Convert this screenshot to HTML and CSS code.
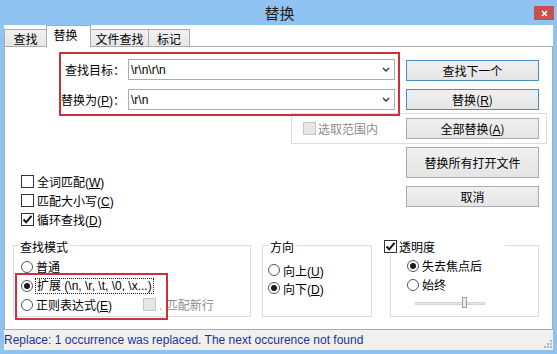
FILE: index.html
```html
<!DOCTYPE html>
<html lang="zh-CN">
<head>
  <meta charset="UTF-8">
  <title>替换</title>
  <link rel="stylesheet" href="styles.css">
</head>
<body>
  <div class="window">
    <div class="titlebar">
      <span></span>
      <span class="title">替换</span>
      <span class="close">
        <svg width="7" height="7" viewBox="0 0 7 7"><path d="M1 1 L6 6 M6 1 L1 6" stroke="#fff" stroke-width="1.6"/></svg>
      </span>
    </div>

    <div class="client">
      <div class="tabs">
        <div class="tab t1">查找</div>
        <div class="tab t2 active">替换</div>
        <div class="tab t3">文件查找</div>
        <div class="tab t4">标记</div>
      </div>

      <div class="panel">
        <div class="top">
          <div class="left">
            <div class="find-box">
              <div class="field">
                <label class="field-label">查找目标：</label>
                <div class="combo">
                  <span class="combo-text">\r\n\r\n</span>
                  <svg class="arrow" width="8" height="5" viewBox="0 0 8 5"><path d="M1 1 L4 4 L7 1" stroke="#333" stroke-width="1.4" fill="none"/></svg>
                </div>
              </div>
              <div class="field">
                <label class="field-label">替换为(<u>P</u>)：</label>
                <div class="combo">
                  <span class="combo-text">\r\n</span>
                  <svg class="arrow" width="8" height="5" viewBox="0 0 8 5"><path d="M1 1 L4 4 L7 1" stroke="#333" stroke-width="1.4" fill="none"/></svg>
                </div>
              </div>
            </div>

            <div class="scope">
              <span class="check disabled"></span>
              <span class="muted">选取范围内</span>
            </div>

            <div class="checks">
              <div class="row"><span class="check"></span><span>全词匹配(<u>W</u>)</span></div>
              <div class="row"><span class="check"></span><span>匹配大小写(<u>C</u>)</span></div>
              <div class="row">
                <span class="check on">
                  <svg width="11" height="11" viewBox="0 0 11 11"><path d="M1.5 5.5 L4.2 8.3 L9.5 1.8" stroke="#111" stroke-width="2" fill="none"/></svg>
                </span>
                <span>循环查找(<u>D</u>)</span>
              </div>
            </div>
          </div>

          <div class="buttons">
            <button class="btn default">查找下一个</button>
            <button class="btn default">替换(<u>R</u>)</button>
            <button class="btn">全部替换(<u>A</u>)</button>
            <button class="btn tall">替换所有打开文件</button>
            <button class="btn">取消</button>
          </div>
        </div>

        <div class="groups">
          <div class="group mode">
            <div class="group-head"><span class="group-title">查找模式</span></div>
            <div class="opts">
              <div class="row"><span class="radio"></span><span>普通</span></div>
              <div class="row"><span class="radio on"></span><span class="focus">扩展 (\n, \r, \t, \0, \x...)</span></div>
              <div class="row">
                <span class="radio"></span><span class="regex-label">正则表达式(<u>E</u>)</span>
                <span class="check disabled"></span><span class="muted dotnl">. 匹配新行</span>
              </div>
            </div>
            <div class="mark"></div>
          </div>

          <div class="group dir">
            <div class="group-head"><span class="group-title">方向</span></div>
            <div class="opts">
              <div class="row"><span class="radio"></span><span>向上(<u>U</u>)</span></div>
              <div class="row"><span class="radio on"></span><span>向下(<u>D</u>)</span></div>
            </div>
          </div>

          <div class="group trans">
            <div class="group-head">
              <span class="group-title">
                <span class="check on">
                  <svg width="11" height="11" viewBox="0 0 11 11"><path d="M1.5 5.5 L4.2 8.3 L9.5 1.8" stroke="#111" stroke-width="2" fill="none"/></svg>
                </span>
                <span>透明度</span>
              </span>
            </div>
            <div class="opts">
              <div class="row"><span class="radio on"></span><span>失去焦点后</span></div>
              <div class="row"><span class="radio"></span><span>始终</span></div>
            </div>
            <div class="slider"><span class="track"></span><span class="thumb"></span></div>
          </div>
        </div>
      </div>

      <div class="status">
        <span class="status-text">Replace: 1 occurrence was replaced. The next occurence not found</span>
        <svg class="grip" width="9" height="9" viewBox="0 0 9 9">
          <rect x="7" y="1" width="2" height="2" fill="#b5b5b5"/>
          <rect x="4" y="4" width="2" height="2" fill="#b5b5b5"/>
          <rect x="7" y="4" width="2" height="2" fill="#b5b5b5"/>
          <rect x="1" y="7" width="2" height="2" fill="#b5b5b5"/>
          <rect x="4" y="7" width="2" height="2" fill="#b5b5b5"/>
          <rect x="7" y="7" width="2" height="2" fill="#b5b5b5"/>
        </svg>
      </div>
    </div>
  </div>
</body>
</html>
```

FILE: styles.css
```css
body {
  margin: 0;
  font-family: "Liberation Sans", "Noto Sans CJK SC", sans-serif;
  font-size: 12px;
  color: #000;
}
.window {
  width: 557px;
  height: 354px;
  box-sizing: border-box;
  padding: 0 4px 4px 4px;
  background: #8fc4f2;
}
.titlebar {
  height: 25px;
  display: grid;
  grid-template-columns: 1fr auto 1fr;
  align-items: center;
}
.title {
  font-family: "Noto Sans CJK SC", sans-serif;
  font-size: 15px;
  color: #1e1e1e;
  margin-left: 2px;
}
.close {
  justify-self: end;
  width: 20px;
  height: 14px;
  margin-right: -1px;
  margin-top: 1px;
  background: #c75050;
  display: flex;
  align-items: center;
  justify-content: center;
}
.client {
  height: 325px;
  background: #fff;
  display: flex;
  flex-direction: column;
}
.tabs {
  height: 21px;
  display: flex;
  align-items: flex-end;
}
.tab {
  height: 17px;
  box-sizing: border-box;
  border: 1px solid #acacac;
  border-bottom: none;
  margin-right: -1px;
  background: linear-gradient(#f2f2f2, #e6e6e6);
  display: flex;
  align-items: center;
  justify-content: center;
  font-family: "Noto Sans CJK SC", sans-serif;
  padding-top: 1px;
}
.t1 { width: 43px; }
.t2 { width: 45px; }
.t3 { width: 59px; }
.t4 { width: 42px; }
.tab.active {
  height: 22px;
  margin-bottom: -1px;
  background: #fff;
  position: relative;
  z-index: 3;
  padding-top: 0;
  padding-bottom: 4px;
  padding-right: 6px;
}
.panel {
  height: 284px;
  box-sizing: border-box;
  border: 1px solid #acacac;
}
.top {
  display: flex;
}
.left {
  width: 401px;
}
.find-box {
  margin: 5px 0 0 54px;
  width: 341px;
  height: 64px;
  box-sizing: border-box;
  border: 2px solid #c8323c;
  padding-top: 5px;
  display: flex;
  flex-direction: column;
  gap: 9px;
  position: relative;
  z-index: 1;
}
.field {
  display: flex;
  align-items: center;
  height: 21px;
}
.field-label {
  width: 64px;
  margin-right: 3px;
  text-align: right;
  white-space: nowrap;
}
.combo {
  width: 267px;
  height: 21px;
  box-sizing: border-box;
  border: 1px solid #acacac;
  background: #fff;
  display: flex;
  align-items: center;
  padding: 0 4px 0 2px;
}
.combo-text {
  flex: 1;
}
.arrow {
  display: block;
}
.scope {
  margin: -3px 0 0 286px;
  width: 256px;
  height: 31px;
  box-sizing: border-box;
  border: 1px solid #dcdcdc;
  display: flex;
  align-items: center;
  padding-left: 11px;
}
.muted {
  color: #8d8d8d;
  margin-left: 2px;
}
.checks {
  margin-top: 28px;
  padding-left: 16px;
}
.row {
  height: 19px;
  display: flex;
  align-items: center;
  white-space: nowrap;
}
.check {
  width: 13px;
  height: 13px;
  box-sizing: border-box;
  border: 1px solid #333;
  background: #fff;
  margin-right: 3px;
  display: inline-flex;
  align-items: center;
  justify-content: center;
  flex: none;
}
.check.disabled {
  border-color: #c4c4c4;
  background: #e6e6e6;
  margin-right: 0;
}
.radio {
  width: 12px;
  height: 12px;
  box-sizing: border-box;
  border: 1px solid #555;
  border-radius: 50%;
  background: #fff;
  margin-right: 3px;
  display: inline-flex;
  align-items: center;
  justify-content: center;
  flex: none;
}
.radio.on::after {
  content: "";
  width: 6px;
  height: 6px;
  border-radius: 50%;
  background: #1a1a1a;
}
.buttons {
  width: 133px;
  margin-top: 13px;
  display: flex;
  flex-direction: column;
  gap: 8px;
  position: relative;
  z-index: 2;
}
.btn {
  height: 21px;
  border: 1px solid #acacac;
  background: linear-gradient(#f0f0f0, #e5e5e5);
  font-family: "Noto Sans CJK SC", sans-serif;
  font-size: 12px;
  color: #000;
  padding: 0;
}
.btn u {
  font-family: "Liberation Sans", sans-serif;
}
.btn.default {
  border-color: #4a8cc4;
}
.btn.tall {
  height: 31px;
}
.groups {
  display: flex;
  margin: 16px 0 0 8px;
}
.group {
  height: 72px;
  box-sizing: border-box;
  border: 1px solid #dcdcdc;
  position: relative;
}
.group-head {
  height: 16px;
  margin-top: -8px;
  display: flex;
}
.group-title {
  display: flex;
  align-items: center;
  background: #fff;
  padding: 0 1px;
  margin-left: 5px;
  white-space: nowrap;
}
.mode { width: 238px; }
.mode .opts { margin-top: 3px; padding-left: 7px; }
.regex-label { width: 107px; }
.dotnl { margin-left: 3px; }
.focus {
  outline: 1px dotted #222;
  padding: 0 1px;
  line-height: 14px;
}
.mark {
  position: absolute;
  left: 1px;
  top: 27px;
  width: 153px;
  height: 47px;
  box-sizing: border-box;
  border: 2px solid #c8323c;
}
.dir {
  width: 110px;
  margin-left: 11px;
}
.dir .group-title { margin-left: 6px; }
.dir .opts { margin-top: 7px; padding-left: 5px; }
.dir .row { height: 18px; }
.trans {
  width: 149px;
  margin-left: 18px;
}
.trans .group-title {
  margin-left: -7px;
  width: 121px;
  padding: 0;
}
.trans .group-title .check { margin-right: 2px; }
.trans .opts { margin-top: 2px; padding-left: 16px; }
.slider {
  position: relative;
  margin: 3px 0 0 24px;
  width: 70px;
  height: 12px;
}
.track {
  position: absolute;
  left: 0;
  right: 0;
  top: 5px;
  height: 3px;
  box-sizing: border-box;
  border: 1px solid #d4d4d4;
  background: #e7e7e7;
}
.thumb {
  position: absolute;
  left: 47px;
  top: 0;
  width: 5px;
  height: 11px;
  box-sizing: border-box;
  border: 1px solid #a0a0a0;
  background: #ececec;
}
.status {
  height: 20px;
  background: #f0f0f0;
  display: flex;
  align-items: center;
  padding-left: 0;
}
.status-text {
  color: #23309c;
  flex: 1;
}
.grip {
  align-self: flex-end;
  margin: 0 1px 2px 0;
}
```
